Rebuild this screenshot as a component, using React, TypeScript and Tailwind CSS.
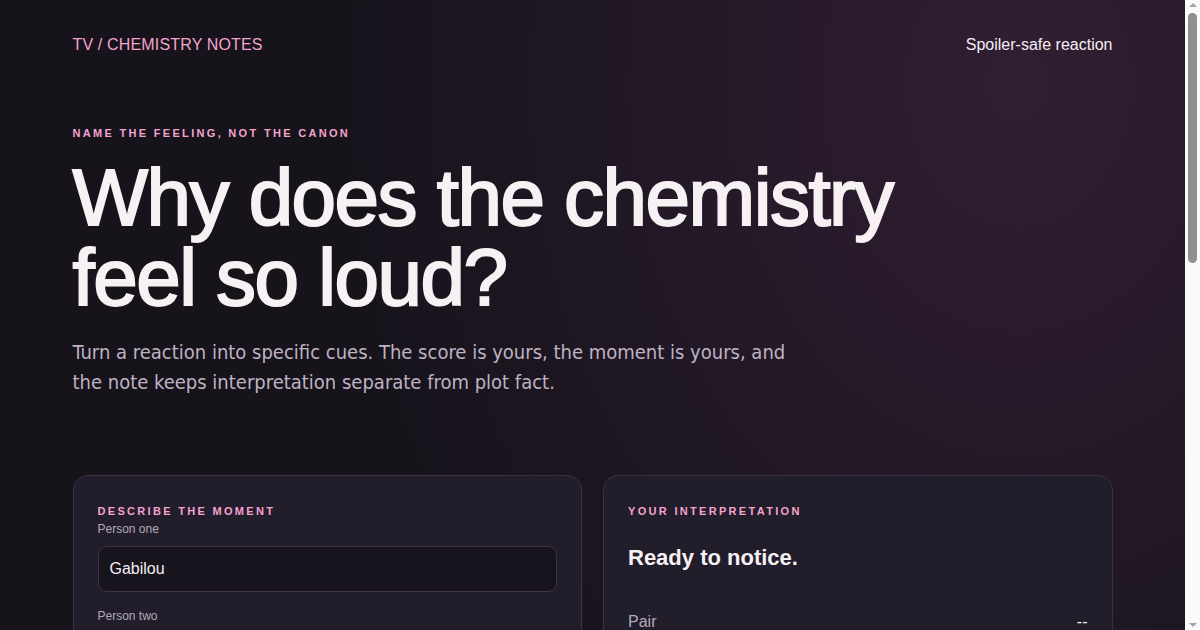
import React from 'react';

const sans = { fontFamily: '"Liberation Sans", Arial, sans-serif' };

function Eyebrow({ children }: { children: React.ReactNode }) {
  return (
    <p className="text-[11px] font-bold uppercase leading-4 tracking-[0.21em] text-[#f3a3cf]">
      {children}
    </p>
  );
}

function Field({ label, value, placeholder }: { label: string; value?: string; placeholder?: string }) {
  return (
    <label className="block">
      <span className="block text-[12px] leading-4 text-[#b3a9bb]">{label}</span>
      <div className="mt-[9px] flex h-[46px] items-center rounded-[9px] border border-[#3e3448] bg-[#17141e] px-[11px] text-[16px] text-[#f4eef4]">
        {value ?? <span className="text-[#6f6678]">{placeholder}</span>}
      </div>
    </label>
  );
}

function Row({ label, value }: { label: string; value: string }) {
  return (
    <div className="flex items-center justify-between border-b border-[#2f2838] pb-3 text-[16px]">
      <span className="text-[#b3a9bb]">{label}</span>
      <span className="text-[#f4eef4]">{value}</span>
    </div>
  );
}

// stands in for the browser scrollbar that the screenshot shows
function Scrollbar() {
  return (
    <div className="fixed top-0 right-0 flex h-screen w-[15px] flex-col items-center bg-[#fafafa] py-[3px]">
      <div className="h-0 w-0 border-x-[4px] border-b-[4px] border-x-transparent border-b-[#a3a3a3]" />
      <div className="mt-[6px] h-[250px] w-[9px] rounded-full bg-[#8f8f8f]" />
      <div className="mt-auto h-0 w-0 border-x-[4px] border-t-[4px] border-x-transparent border-t-[#a3a3a3]" />
    </div>
  );
}

export default function App() {
  return (
    <div className="min-h-screen bg-[#16131b] pr-[15px]" style={sans}>
      <div className="min-h-full bg-[radial-gradient(ellipse_at_86%_6%,rgba(60,34,60,0.7),rgba(22,19,27,0)_48%)] text-[#f6f0f4]">
        <div className="mx-auto max-w-[1040px] pb-24">
          <header className="flex items-center justify-between pt-[35px] text-[16px] leading-5">
            <span className="tracking-[0.01em] text-[#f3a3cf]">TV / CHEMISTRY NOTES</span>
            <span className="text-[#f4eef4]">Spoiler-safe reaction</span>
          </header>

          <section className="mt-[70px]">
            <Eyebrow>Name the feeling, not the canon</Eyebrow>
            <h1 className="mt-[17px] max-w-[880px] text-[80px] font-normal leading-[80px] tracking-[-0.019em] text-[#f7f1f4] [-webkit-text-stroke:2px_#f7f1f4]">
              Why does the chemistry feel so loud?
            </h1>
            <p
              className="mt-[19px] max-w-[730px] text-[20px] leading-[30px] text-[#bfb2c2]"
              style={{ fontFamily: '"DejaVu Sans Condensed", "Liberation Sans", Arial, sans-serif' }}
            >
              Turn a reaction into specific cues. The score is yours, the moment is yours, and the note keeps
              interpretation separate from plot fact.
            </p>
          </section>

          <main className="mt-[78px] grid grid-cols-2 gap-[21px]">
            <div className="rounded-[15px] border border-[#3a3144] bg-[#221d2b] px-[24px] pt-[27px] pb-8">
              <Eyebrow>Describe the moment</Eyebrow>
              <div className="mt-[2px] flex flex-col gap-[16px]">
                <Field label="Person one" value="Gabilou" />
                <Field label="Person two" placeholder="Who shares the scene?" />
                <Field label="Show or episode" placeholder="Optional" />
                <label className="block">
                  <span className="block text-[12px] leading-4 text-[#b3a9bb]">What happened in the moment</span>
                  <div className="mt-[9px] h-[120px] rounded-[9px] border border-[#3e3448] bg-[#17141e] px-[11px] py-3 text-[16px] text-[#6f6678]">
                    A glance, a pause, a line that landed...
                  </div>
                </label>
                <div>
                  <span className="block text-[12px] leading-4 text-[#b3a9bb]">Intensity</span>
                  <div className="mt-4 h-1.5 rounded-full bg-[#3a3144]">
                    <div className="h-full w-1/2 rounded-full bg-[#f3a3cf]" />
                  </div>
                </div>
                <div className="flex h-[46px] items-center justify-center rounded-[9px] bg-[#f3a3cf] text-[15px] font-bold text-[#1a1520]">
                  Read the chemistry
                </div>
              </div>
            </div>

            <div className="self-start rounded-[15px] border border-[#3a3144] bg-[#221d2b] px-[24px] pt-[27px] pb-8">
              <Eyebrow>Your interpretation</Eyebrow>
              <h2 className="mt-[23px] text-[22px] font-bold leading-8 text-[#f7f1f4]">Ready to notice.</h2>
              <div className="mt-[36px] flex flex-col gap-4">
                <Row label="Pair" value="--" />
                <Row label="Score" value="--" />
                <Row label="Strongest cue" value="--" />
                <Row label="Tone" value="--" />
              </div>
              <p className="mt-6 text-[14px] leading-6 text-[#8f8598]">
                Add a moment to see which cues carry the scene. Nothing here claims what the show intends.
              </p>
            </div>
          </main>

          <section className="mt-16 rounded-[15px] border border-[#3a3144] bg-[#1d1925] px-[24px] py-[27px]">
            <Eyebrow>How the note works</Eyebrow>
            <div className="mt-5 grid grid-cols-3 gap-6 text-[15px] leading-6 text-[#b3a9bb]">
              <p>Name two people and one scene. Keep it to what you saw on screen.</p>
              <p>Pick the cues that stood out: timing, distance, eye lines, silence.</p>
              <p>Your score describes your reaction, not what the writers planned.</p>
            </div>
          </section>
        </div>
      </div>
      <Scrollbar />
    </div>
  );
}
